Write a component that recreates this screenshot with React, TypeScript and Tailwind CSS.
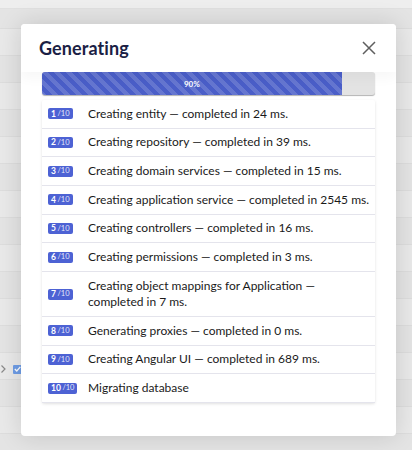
import React from "react";

const steps: [number, string][] = [
  [1, "Creating entity — completed in 24 ms."],
  [2, "Creating repository — completed in 39 ms."],
  [3, "Creating domain services — completed in 15 ms."],
  [4, "Creating application service — completed in 2545 ms."],
  [5, "Creating controllers — completed in 16 ms."],
  [6, "Creating permissions — completed in 3 ms."],
  [7, "Creating object mappings for Application — completed in 7 ms."],
  [8, "Generating proxies — completed in 0 ms."],
  [9, "Creating Angular UI — completed in 689 ms."],
  [10, "Migrating database"],
];

const bgRows = Array.from({ length: 16 }, (_, i) => i);

export default function App() {
  return (
    <div
      className="relative w-[412px] h-[450px] overflow-hidden bg-[#e6e6e6]"
      style={{ fontFamily: 'Lato, "Open Sans", sans-serif' }}
    >
      {/* background page (dimmed) */}
      <div className="flex flex-col">
        <div className="h-[9px] bg-[#eeeeee] border-b border-[#e0e0e0]" />
        <div className="h-[20px] bg-[#e4e4e4] border-b border-[#dcdcdc]" />
        {bgRows.map((i) => (
          <div
            key={i}
            className={
              i % 2 === 0
                ? "h-[27px] bg-[#e9e9e9] border-b border-[#dddddd] flex items-center"
                : "h-[27px] bg-[#e4e4e4] border-b border-[#dddddd] flex items-center"
            }
          >
            {i === 12 && (
              <div className="flex items-center gap-[7px] pl-[1px] pt-[6px]">
                <svg width="5" height="8" viewBox="0 0 5 8">
                  <path d="M0.5 0.5 L4 4 L0.5 7.5" fill="none" stroke="#8a8a8a" strokeWidth="1.2" />
                </svg>
                <div className="w-[9px] h-[9px] rounded-[1px] bg-[#6f9de6] flex items-center justify-center">
                  <svg width="7" height="6" viewBox="0 0 7 6">
                    <path d="M0.8 3 L2.8 5 L6.3 0.8" fill="none" stroke="#ffffff" strokeWidth="1.3" />
                  </svg>
                </div>
              </div>
            )}
          </div>
        ))}
      </div>

      {/* modal */}
      <div className="absolute left-[21px] top-[24px] w-[375px] h-[412px] bg-white rounded-[4px] shadow-[0_0_24px_rgba(0,0,0,0.14)] flex flex-col overflow-hidden">
        <div className="relative z-10 h-[48px] shrink-0 bg-white flex items-center justify-between pl-[18px] pr-[20px] shadow-[0_6px_12px_rgba(0,0,0,0.035)]">
          <span className="text-[18px] font-bold text-[#1b1f45] tracking-[0.1px]">Generating</span>
          <svg width="14" height="14" viewBox="0 0 14 14">
            <path d="M1 1 L13 13 M13 1 L1 13" stroke="#5f5f5f" strokeWidth="1.5" />
          </svg>
        </div>
        <div className="px-[21px] flex flex-col">
          <div className="h-[23px] rounded-[3px] bg-[#e3e3e3] overflow-hidden shadow-[0_1px_1px_rgba(0,0,0,0.3)] flex">
            <div
              className="h-full flex items-center justify-center text-white text-[8px] font-bold bg-[#4a5ec8]"
              style={{
                width: "90%",
                backgroundImage:
                  "linear-gradient(45deg, rgba(255,255,255,0.15) 25%, transparent 25%, transparent 50%, rgba(255,255,255,0.15) 50%, rgba(255,255,255,0.15) 75%, transparent 75%, transparent)",
                backgroundSize: "12px 12px",
              }}
            >
              90%
            </div>
          </div>
          <div className="mt-[5px] bg-white rounded-[2px] shadow-[0_1px_3px_rgba(0,0,0,0.12)] flex flex-col">
            {steps.map(([n, text]) => (
              <div
                key={n}
                className="flex items-center border-b border-[#e4e4ec] pl-[6px] pr-[4px] py-[5.7px]"
              >
                <div className="w-[40px] shrink-0 flex">
                  <span className="inline-flex items-center h-[11px] rounded-[2px] bg-[#4d62d4] px-[3px] text-white leading-none">
                    <span className="text-[8.5px] font-bold">{n}</span>
                    <span className="text-[7.5px] opacity-85 ml-[1.5px]">/10</span>
                  </span>
                </div>
                <span
                  className={
                    n === 7
                      ? "text-[12px] leading-[16.3px] text-[#1a1a1a] max-w-[240px]"
                      : "text-[12px] leading-[16.3px] text-[#1a1a1a] max-w-[290px]"
                  }
                >
                  {text}
                </span>
              </div>
            ))}
          </div>
        </div>
      </div>
    </div>
  );
}
